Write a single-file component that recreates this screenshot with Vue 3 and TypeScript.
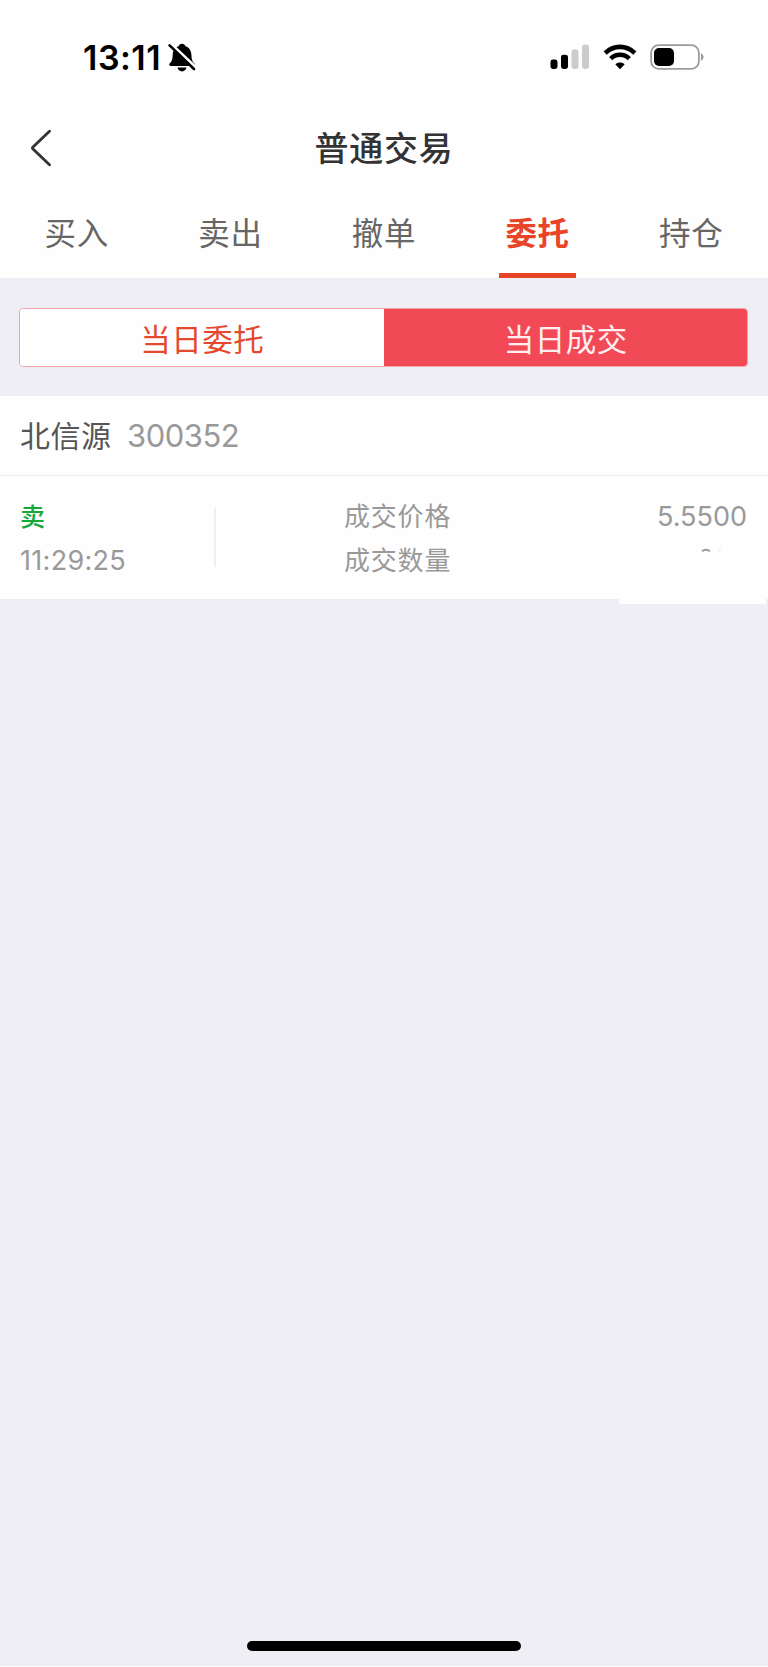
<script setup lang="ts">
import { ref } from 'vue'

interface Trade {
  name: string
  code: string
  side: string
  time: string
  price: string
}

const tabs: string[] = ['买入', '卖出', '撤单', '委托', '持仓']
const activeTab = ref('委托')
const segments: string[] = ['当日委托', '当日成交']
const activeSegment = ref('当日成交')
const trade: Trade = {
  name: '北信源',
  code: '300352',
  side: '卖',
  time: '11:29:25',
  price: '5.5500',
}
</script>

<template>
  <div class="screen">
    <div class="status">
      <div class="status-left">
        <span class="clock">13:11</span>
        <svg class="bell" width="28" height="30" viewBox="0 0 28 30">
          <path d="M14 .8c1.800 0 3.100 1 3.500 2.500 3.900 1.300 5.700 4.500 5.900 8.600.2 5 1.300 6.700 3.100 8.700.8.9.3 2.300-1 2.300H2.600C1.300 22.900.8 21.500 1.600 20.600c1.800-2 2.900-3.700 3.100-8.700.2-4.100 2-7.300 5.900-8.600C11 1.800 12.200.8 14 .8z" />
          <path d="M9.500 24.600h9c-.4 2.300-2.200 3.800-4.500 3.800s-4.100-1.500-4.500-3.800z" />
          <path d="M2 1 28 25.600" stroke="#fefefe" stroke-width="4.400" />
          <path d="M1.600 2.400 26 26" stroke="#000" stroke-width="2.600" stroke-linecap="round" />
        </svg>
      </div>
      <div class="status-right">
        <svg width="40" height="26" viewBox="0 0 40 26">
          <rect x=".5" y="15.500" width="7" height="9.500" rx="2.400" />
          <rect x="11" y="10.700" width="7" height="14.300" rx="2.400" />
          <rect x="21.500" y="5.500" width="7" height="19.500" rx="2.400" fill="#ccc" />
          <rect x="32" y=".5" width="7" height="24.500" rx="2.400" fill="#ccc" />
        </svg>
        <svg class="wifi" width="34" height="26" viewBox="0 0 34 26">
          <path d="M2.200 9.100C10.400.8 23.600.8 31.800 9.100" fill="none" stroke="#000" stroke-width="4.600" />
          <path d="M7.700 14.600C12.900 9.500 21.100 9.500 26.300 14.600" fill="none" stroke="#000" stroke-width="4.400" />
          <path d="M17 25.200l-4.700-4.900c2.600-2.400 6.800-2.400 9.400 0z" />
        </svg>
        <svg class="battery" width="54" height="26" viewBox="0 0 54 26">
          <rect x="1.100" y="1.100" width="47.800" height="23.800" rx="7.600" fill="none" stroke="#9c9c9c" stroke-width="1.800" />
          <rect x="4" y="4" width="20" height="18" rx="5" />
          <path d="M51 9.500c1.700.7 2.500 1.900 2.500 3.500s-.8 2.800-2.500 3.500z" fill="#999" />
        </svg>
      </div>
    </div>

    <header class="navbar">
      <svg class="back" width="22" height="38" viewBox="0 0 22 38">
        <path d="M19.500 2.200 3 17.900q-1.100 1.100 0 2.200L19.500 35.800" fill="none" stroke="#333" stroke-width="2.800" stroke-linecap="round" />
      </svg>
      <h1>普通交易</h1>
    </header>

    <nav class="tabs">
      <div
        v-for="tab in tabs"
        :key="tab"
        class="tab"
        :class="{ active: tab === activeTab }"
        @click="activeTab = tab"
      >
        <span>{{ tab }}</span>
      </div>
    </nav>

    <div class="segments">
      <div
        v-for="item in segments"
        :key="item"
        class="segment"
        :class="{ active: item === activeSegment }"
        @click="activeSegment = item"
      >
        {{ item }}
      </div>
    </div>

    <section class="trade">
      <div class="trade-head">
        <span class="name">{{ trade.name }}</span>
        <span class="code">{{ trade.code }}</span>
      </div>
      <div class="trade-body">
        <div class="when">
          <div class="side">{{ trade.side }}</div>
          <div class="time">{{ trade.time }}</div>
        </div>
        <div class="divider"></div>
        <div class="labels">
          <div>成交价格</div>
          <div>成交数量</div>
        </div>
        <div class="values">
          <div class="price">{{ trade.price }}</div>
          <div class="mask">
            <svg width="40" height="6" viewBox="0 0 40 6">
              <path d="M3 3.200Q7 .4 11 3.200" fill="none" stroke="#999" stroke-width="2" />
              <path d="M19 2h3" stroke="#e4e4e4" stroke-width="1" />
            </svg>
          </div>
        </div>
      </div>
    </section>

    <footer class="home"><div class="home-bar"></div></footer>
  </div>
</template>

<style>
body {
  background: #fefefe;
}
</style>

<style scoped>
.screen {
  display: flex;
  flex-direction: column;
  width: 768px;
  height: 1666px;
  background: #efeef4;
  font-family: Inter, 'Noto Sans CJK SC', sans-serif;
  color: #999;
}
.status {
  display: flex;
  justify-content: space-between;
  height: 110px;
  padding: 0 64px 0 83px;
  background: #fefefe;
}
.status-left,
.status-right {
  display: flex;
  align-items: flex-start;
}
.clock {
  width: 78px;
  margin-top: 38px;
  font-size: 34px;
  line-height: 40px;
  font-weight: 600;
  letter-spacing: 0.5px;
  color: #000;
  white-space: nowrap;
}
.bell {
  margin: 43px 0 0 6.500px;
}
.status-right {
  padding-top: 44px;
}
.wifi {
  margin-left: 12.500px;
}
.battery {
  margin-left: 13.500px;
}
.navbar {
  display: flex;
  align-items: center;
  height: 76px;
  padding-left: 30px;
  background: #fefefe;
}
h1 {
  flex: 1;
  margin: 2px 52px 0 0;
  text-align: center;
  font-size: 34px;
  line-height: 40px;
  font-weight: 500;
  letter-spacing: 0.7px;
  color: #333;
}
.tabs {
  display: flex;
  height: 92px;
  background: #fefefe;
}
.tab {
  display: flex;
  justify-content: center;
  flex: 1;
}
.tab span {
  box-sizing: border-box;
  width: 77px;
  height: 92px;
  padding-top: 28px;
  text-align: center;
  font-size: 31.500px;
  line-height: 40px;
  letter-spacing: 0.7px;
  color: #666;
}
.tab.active span {
  border-bottom: 5px solid #e94428;
  font-weight: 700;
  color: #e94428;
}
.segments {
  box-sizing: border-box;
  display: flex;
  height: 59px;
  margin: 30px 20px 29px 19px;
  border: 1px solid #f5a3ab;
  border-radius: 4px;
  overflow: hidden;
}
.segment {
  flex: 1;
  background: #fefefe;
  text-align: center;
  font-size: 30.500px;
  line-height: 61px;
  letter-spacing: 0.5px;
  color: #e5492d;
}
.segment.active {
  margin: -1px;
  background: #f24957;
  line-height: 63px;
  color: #ffeff0;
}
.trade {
  height: 203px;
  background: #fefefe;
}
.trade-head {
  box-sizing: border-box;
  display: flex;
  height: 80px;
  padding-left: 20px;
  border-bottom: 1.500px solid #ececec;
  line-height: 80px;
}
.name {
  width: 107px;
  font-size: 30px;
  letter-spacing: 0.5px;
  color: #555;
}
.code {
  font-size: 31px;
  letter-spacing: -0.5px;
}
.trade-body {
  display: flex;
  padding-top: 19px;
  font-size: 27px;
  line-height: 44px;
}
.when {
  width: 194px;
  padding-left: 20px;
}
.side {
  font-size: 25px;
  font-weight: 500;
  color: #14a83b;
}
.time {
  letter-spacing: 0.300px;
}
.divider {
  width: 2px;
  height: 59px;
  margin-top: 13px;
  background: #efefef;
}
.labels {
  width: 275px;
  padding-left: 128px;
  font-size: 26px;
  letter-spacing: 0.8px;
}
.values {
  flex: 1;
}
.price {
  padding-right: 21px;
  text-align: right;
}
.mask {
  width: 147px;
  height: 65px;
  background: #fefefe;
}
.mask svg {
  display: block;
  margin-left: 80px;
  padding-top: 9px;
}
.home {
  display: flex;
  justify-content: center;
  margin-top: auto;
  padding-bottom: 15px;
}
.home-bar {
  width: 274px;
  height: 10px;
  border-radius: 5px;
  background: #000;
}
</style>
